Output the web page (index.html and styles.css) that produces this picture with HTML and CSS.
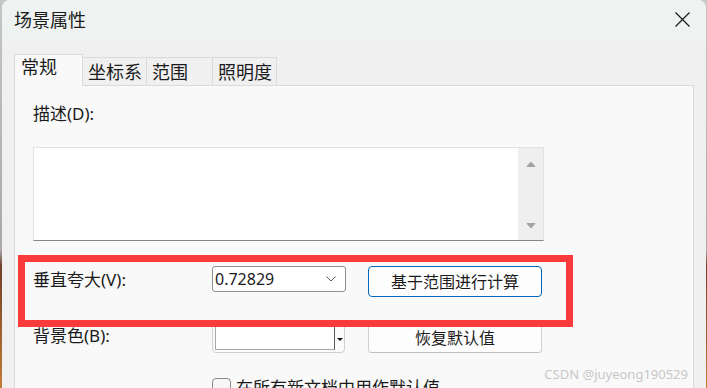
FILE: index.html
```html
<!DOCTYPE html>
<html lang="zh-CN">
<head>
  <meta charset="UTF-8">
  <title>场景属性</title>
  <link rel="stylesheet" href="styles.css">
</head>
<body>
  <div class="dialog">
    <div class="titlebar">
      <span class="title">场景属性</span>
      <svg class="close" viewBox="0 0 15 15" width="15" height="15">
        <path d="M0.5 0.5 L14.5 14.5 M14.5 0.5 L0.5 14.5" stroke="#1a1a1a" stroke-width="1.2" fill="none"/>
      </svg>
    </div>

    <div class="content">
      <div class="tabs">
        <div class="tab active">常规</div>
        <div class="tab tab-coord">坐标系</div>
        <div class="tab tab-extent">范围</div>
        <div class="tab tab-light">照明度</div>
      </div>

      <div class="panel">
        <label class="desc-label" for="desc">描述(D):</label>
        <div class="desc">
          <textarea id="desc"></textarea>
          <div class="vscroll">
            <svg viewBox="0 0 10 6" width="10" height="6"><path d="M1 5.5 L5 1 L9 5.5 Z" fill="#a3a3a3" stroke="#a3a3a3" stroke-linejoin="round"/></svg>
            <svg viewBox="0 0 10 6" width="10" height="6"><path d="M1 0.5 L9 0.5 L5 5 Z" fill="#a3a3a3" stroke="#a3a3a3" stroke-linejoin="round"/></svg>
          </div>
        </div>

        <div class="grid">
          <label class="field-label">垂直夸大(V):</label>
          <div class="combo">
            <span>0.72829</span>
            <svg viewBox="0 0 10 6" width="10" height="6"><path d="M0.5 0.5 L5 5 L9.5 0.5" stroke="#5a5a5a" stroke-width="1" fill="none"/></svg>
          </div>
          <button class="btn primary">基于范围进行计算</button>

          <label class="field-label">背景色(B):</label>
          <div class="colorpick">
            <div class="swatch"></div>
            <div class="drop"><span class="caret"></span></div>
          </div>
          <button class="btn">恢复默认值</button>

          <label class="check">
            <span class="box"></span>
            <span>在所有新文档中用作默认值</span>
          </label>
        </div>
      </div>
    </div>
  </div>

  <div class="annotation"></div>
  <div class="watermark">CSDN @juyeong190529</div>
</body>
</html>
```

FILE: styles.css
```css
* {
  box-sizing: border-box;
}
body {
  margin: 0;
  height: 388px;
  overflow: hidden;
  position: relative;
  background: linear-gradient(#c6c6c6, #a8a8a8 250px, #6f4028 266px, #c27d36 388px);
  font-family: "Noto Sans", "Noto Sans CJK SC", sans-serif;
  color: #1b1b1b;
}
.dialog {
  margin-left: 2px;
  width: 704px;
  height: 400px;
  background: #f0f0f0;
  border-radius: 8px 8px 0 0;
  overflow: hidden;
}
.titlebar {
  height: 42px;
  display: flex;
  align-items: center;
  justify-content: space-between;
  padding: 0 16px 3px 12px;
  background: #eef3f1;
}
.title {
  font-size: 18px;
  line-height: 24px;
}
.close {
  display: block;
}
.content {
  padding: 12px 0 0 12px;
}
.tabs {
  display: flex;
  align-items: flex-end;
  height: 31px;
}
.tab {
  height: 28px;
  padding: 2px 0 0 5px;
  font-size: 18px;
  line-height: 24px;
  background: #f0f0f0;
  border: 1px solid #dadada;
  border-bottom: none;
  border-left: none;
}
.tab.active {
  position: relative;
  z-index: 1;
  width: 69px;
  height: 32px;
  margin-bottom: -1px;
  padding: 0 0 0 6px;
  background: #f9f9f9;
  border-left: 1px solid #dadada;
}
.tab-coord {
  width: 64px;
}
.tab-extent {
  width: 66px;
}
.tab-light {
  width: 64px;
}
.panel {
  width: 680px;
  height: 320px;
  padding: 16px 0 0 18px;
  background: #f9f9f9;
  border: 1px solid #dadada;
}
.desc-label {
  display: block;
  font-size: 17px;
  line-height: 24px;
}
.desc {
  display: flex;
  width: 511px;
  height: 94px;
  margin-top: 21px;
  background: #fff;
  border: 1px solid #e2e2e2;
  border-bottom-color: #868686;
}
.desc textarea {
  flex: 1;
  border: none;
  resize: none;
  outline: none;
  background: transparent;
}
.vscroll {
  width: 25px;
  display: flex;
  flex-direction: column;
  align-items: center;
  justify-content: space-between;
  padding: 13px 0 11px;
  background: #efefef;
}
.vscroll svg {
  display: block;
}
.grid {
  display: grid;
  grid-template-columns: 156px 133px 174px;
  column-gap: 23px;
  row-gap: 25px;
  align-items: start;
  margin-top: 25px;
}
.field-label {
  font-size: 17px;
  line-height: 27px;
}
.combo {
  display: flex;
  align-items: center;
  justify-content: space-between;
  width: 134px;
  height: 26px;
  padding: 0 9px 0 2px;
  background: #fff;
  border: 1px solid #8f8f8f;
  border-radius: 3px;
  font-size: 16px;
  line-height: 20px;
}
.combo svg {
  display: block;
}
.btn {
  height: 31px;
  padding: 0;
  font-family: inherit;
  font-size: 16px;
  line-height: 20px;
  color: #1b1b1b;
  background: #fdfdfd;
  border: 1px solid #d0d0d0;
  border-bottom-color: #c0c0c0;
  border-radius: 4px;
}
.btn.primary {
  border-color: #0067c0;
}
.colorpick {
  display: flex;
  height: 31px;
  padding: 2px 0 2px 2px;
  background: #fbfbfb;
  border: 1px solid #d0d0d0;
  border-radius: 4px;
}
.swatch {
  width: 120px;
  background: #fff;
  border: 1px solid #a8a8a8;
  border-right-color: #5e5e5e;
}
.drop {
  flex: 1;
  display: flex;
  align-items: center;
  justify-content: center;
  padding-top: 3px;
}
.caret {
  width: 0;
  height: 0;
  border-left: 3px solid transparent;
  border-right: 3px solid transparent;
  border-top: 3px solid #111;
}
.check {
  grid-column: 2 / 4;
  display: flex;
  align-items: flex-start;
  gap: 5px;
  font-size: 17px;
  line-height: 19px;
}
.box {
  width: 19px;
  height: 19px;
  flex: none;
  background: #f6f6f6;
  border: 1px solid #8a8a8a;
  border-radius: 4px;
}
.annotation {
  position: absolute;
  left: 18px;
  top: 255px;
  width: 555px;
  height: 72px;
  border: 7px solid #fb3b3b;
}
.watermark {
  position: absolute;
  right: 19px;
  top: 366px;
  font-size: 13px;
  line-height: 16px;
  color: #c6c6c6;
  text-shadow: 0 0 1px #fff;
}
```
